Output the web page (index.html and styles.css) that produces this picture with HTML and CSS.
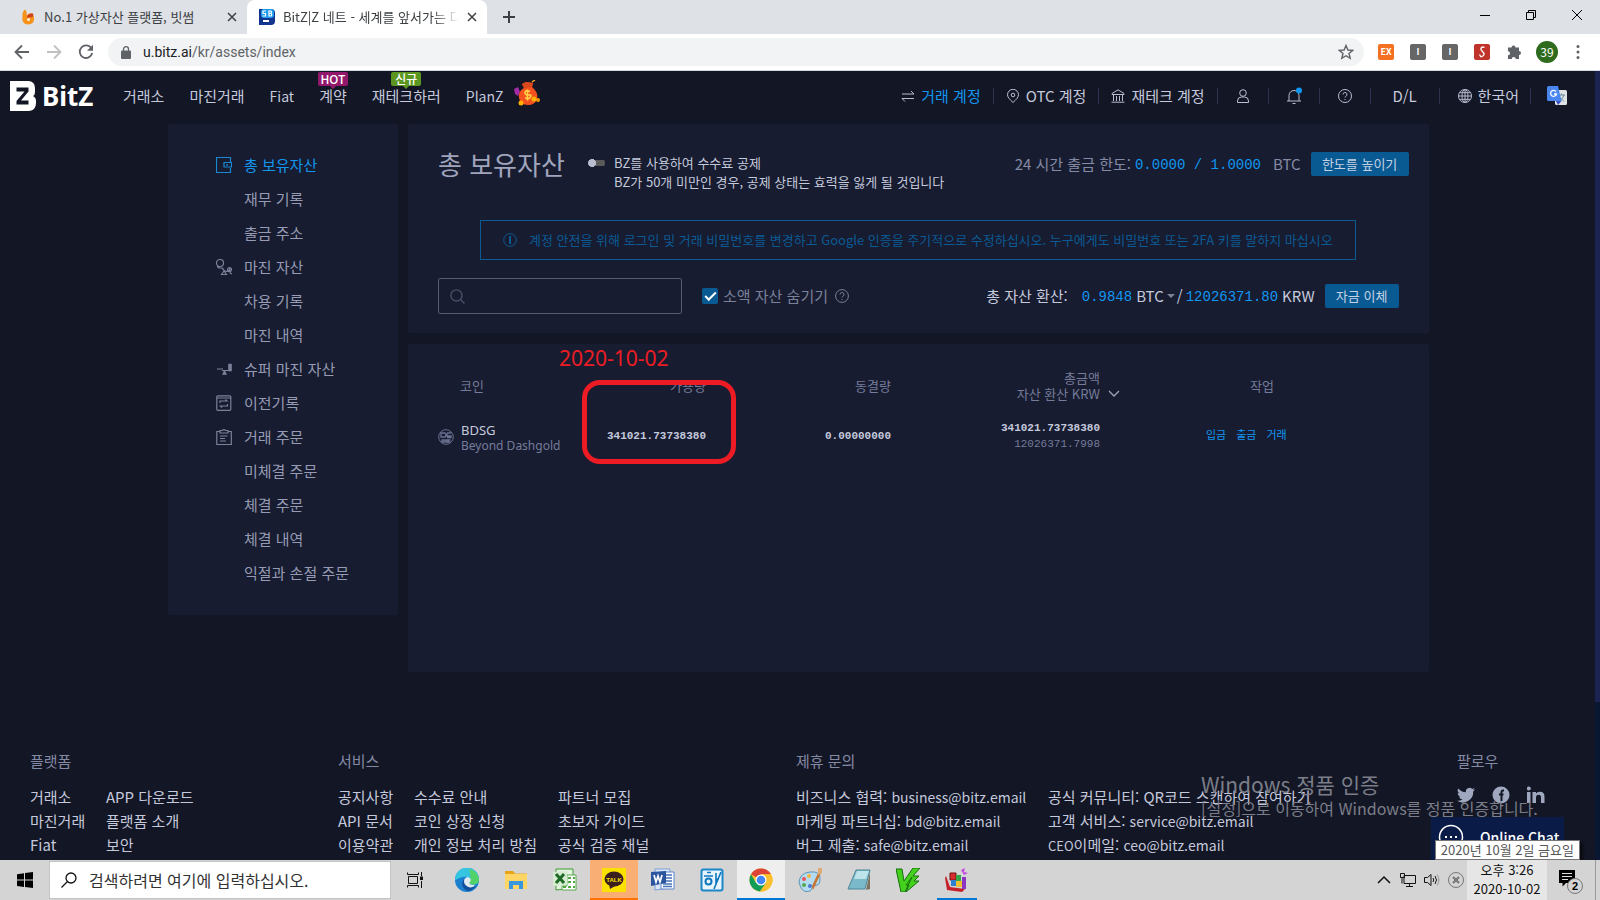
FILE: index.html
```html
<!DOCTYPE html>
<html lang="ko">
<head>
<meta charset="utf-8">
<title>BitZ|Z 네트 - 세계를 앞서가는 디지털 자산 거래소</title>
<link rel="stylesheet" href="styles.css">
</head>
<body>
<div class="tabbar">
  <div class="tab">
    <svg class="tab-fav" viewBox="0 0 16 16"><path d="M5 0.500C3 2 2 5 2.500 7C1.500 12 4 15.500 8 15.500C12 15.500 14.500 12.500 14 9.500C14.500 8 13 5.500 12 4.500C10 4 8 5 7 6.500C6.500 5 7 2 5 .5Z" fill="#f7931a"/><path d="M7 7.500C8 5 10 4 13 4.500C14 8 12 8 11 8.500C9.500 7 8 8.500 7.500 10Z" fill="#d0401c"/><circle cx="8.500" cy="10.500" r="1.500" fill="#fff3e0"/></svg>
    <span class="tab-title">No.1 가상자산 플랫폼, 빗썸</span>
    <button class="tab-close" aria-label="탭 닫기"><svg viewBox="0 0 10 10"><path d="M1 1l8 8M9 1l-8 8"/></svg></button>
  </div>
  <div class="tab tab-active">
    <svg class="tab-fav" viewBox="0 0 16 16"><path d="M0 0h12a4 4 0 0 1 4 4v8a4 4 0 0 1-4 4H0z" fill="#12358f"/><rect x="2" y="0" width="13" height="9" rx="3" fill="#1d9bf0"/><path d="M7 2H4v2.500h2.500V7H3.500M10 2h2q1 1 0 2.500q1.500 1 0 2.500h-2zM10 4.500h2" stroke="#fff" stroke-width="1.200" fill="none"/><path d="M4 12h6" stroke="#fff" stroke-width="2"/></svg>
    <span class="tab-title tab-fade">BitZ|Z 네트 - 세계를 앞서가는 디</span>
    <button class="tab-close" aria-label="탭 닫기"><svg viewBox="0 0 10 10"><path d="M1 1l8 8M9 1l-8 8"/></svg></button>
  </div>
  <button class="tab-new" aria-label="새 탭"><svg viewBox="0 0 12 12"><path d="M6 0v12M0 6h12"/></svg></button>
  <div class="win">
    <button aria-label="최소화"><svg viewBox="0 0 10 10"><path d="M0 5.500h10"/></svg></button>
    <button aria-label="이전 크기로"><svg viewBox="0 0 10 10"><path d="M.5 2.500h7v7h-7zM2.500 2.500v-2h7v7h-2"/></svg></button>
    <button aria-label="닫기"><svg viewBox="0 0 10 10"><path d="M0 0l10 10M10 0L0 10"/></svg></button>
  </div>
</div>
<div class="toolbar">
  <button class="tool" aria-label="뒤로"><svg viewBox="0 0 16 16"><path d="M15 8H2M8 1.500L1.500 8L8 14.500"/></svg></button>
  <button class="tool tool-off" aria-label="앞으로"><svg viewBox="0 0 16 16"><path d="M1 8h13M8 1.500L14.500 8L8 14.500"/></svg></button>
  <button class="tool" aria-label="새로고침"><svg viewBox="0 0 16 16"><path d="M13.500 4.500A6.300 6.300 0 1 0 14.200 9"/><path d="M15 .8v6H9z" fill="#5f6368" stroke="none"/></svg></button>
  <div class="omni">
    <svg class="lock" viewBox="0 0 10 13"><rect x="0" y="4.500" width="10" height="8.500" rx="1" fill="#5f6368"/><path d="M2.500 5V3.200a2.500 2.500 0 0 1 5 0V5" fill="none" stroke="#5f6368" stroke-width="1.300"/></svg>
    <span class="url"><b>u.bitz.ai</b>/kr/assets/index</span>
    <svg class="star" viewBox="0 0 16 16"><path d="M8 1.500l1.900 4.500 4.800.4-3.700 3.100 1.200 4.800L8 11.700l-4.200 2.600L5 9.500 1.300 6.400 6.100 6z" fill="none" stroke="#5f6368" stroke-width="1.400"/></svg>
  </div>
  <div class="exts">
    <span class="ext ext-or">EX</span>
    <span class="ext ext-gr">I</span>
    <span class="ext ext-gr">I</span>
    <span class="ext ext-rd"><svg viewBox="0 0 16 16"><path d="M10.500 3.500C8 2 5.500 4.500 8 7s3.500 4-1 6M5.500 10.500L7 13" fill="none" stroke="#fff" stroke-width="1.300"/></svg></span>
    <svg class="ext" viewBox="0 0 16 16"><path d="M5.500 3.500a2 2 0 1 1 4 0H13v3.500a2 2 0 1 1 0 4V15H9.700a2 2 0 1 0-4 0H2v-3.700a2 2 0 1 0 0-4V3.500z" fill="#5f6368"/></svg>
    <span class="avatar">39</span>
    <svg class="dots" viewBox="0 0 4 16"><circle cx="2" cy="2.500" r="1.500"/><circle cx="2" cy="8" r="1.500"/><circle cx="2" cy="13.500" r="1.500"/></svg>
  </div>
</div>
<main class="page">
  <div class="scrollbar"></div>
  <header class="head">
    <a class="logo" href="#"><svg viewBox="0 0 26 30"><path d="M0 0h19q6 1 6 7v4q0 3-2 4q3 1.500 3 5v2q0 7-7 8H0z" fill="#fff"/><path d="M6.500 6.500h12v4L11 19.500h7.500v4h-12v-3.500L14.500 10.500h-8z" fill="#131625"/></svg><span>BitZ</span></a>
    <nav class="nav">
      <a href="#">거래소</a><a href="#">마진거래</a><a class="lat" href="#">Fiat</a>
      <a href="#">계약<i class="flag flag-hot">HOT</i></a>
      <a href="#">재테크하러<i class="flag flag-new">신규</i></a>
      <a class="lat" href="#">PlanZ</a>
    </nav>
    <svg class="bag" viewBox="0 0 26 26"><path d="M0 9l4-2 2 5-2 4-3-2z" fill="#a52aa8"/><path d="M8 4l4-2 7 1-1 4q7 6 5 12t-9 6q-8 0-9-7t5-10z" fill="#f4511e"/><path d="M8 4l4-2 7 1-1 4-8 1z" fill="#d9481c"/><path d="M18 2l3-2" stroke="#f6a623" stroke-width="1.500"/><path d="M16 11.500q-5-2-5 1t4 2.500t0 3.500l-4-.5M13.500 9.500v11" fill="none" stroke="#ffd54a" stroke-width="1.500"/><circle cx="20" cy="19" r="2.500" fill="#ffb300"/><circle cx="24" cy="20" r="2" fill="#ff9800"/><circle cx="7" cy="23" r="2.500" fill="#ffb300"/></svg>
    <div class="acct">
      <a class="cell on" href="#"><svg viewBox="0 0 14 14"><path d="M1 5h12L10 2M13 9.500H1L4 12.500"/></svg>거래 계정</a>
      <a class="cell" href="#"><svg viewBox="0 0 14 14"><path d="M7 13.500C4 10.500 1.500 8.500 1.500 5.800a5.500 5.500 0 0 1 11 0C12.500 8.500 10 10.500 7 13.500z"/><circle cx="7" cy="6" r="1.800"/></svg>OTC 계정</a>
      <a class="cell" href="#"><svg viewBox="0 0 14 14"><path d="M7 .8L1 4.500V5.500h12V4.500zM2.500 5.500V12M5.500 7v5M8.500 7v5M11.500 5.500V12M.5 13.200h13"/></svg>재테크 계정</a>
      <a class="cell ico" href="#" aria-label="내 계정"><svg viewBox="0 0 14 14"><circle cx="7" cy="4" r="3.300"/><path d="M1.500 13.500v-1.500q0-4 4-4h3q4 0 4 4v1.500z"/></svg></a>
      <a class="cell ico" href="#" aria-label="알림"><svg viewBox="0 0 14 14"><path d="M0 12h14M2 12V6.500a5 5 0 0 1 10 0V12M5.500 14.500h3"/><circle cx="12" cy="1.500" r="3" fill="#1296f0" stroke="none"/></svg></a>
      <a class="cell ico" href="#" aria-label="도움말"><svg viewBox="0 0 14 14"><circle cx="7" cy="7" r="6.500"/><path d="M5 5.500a2 2 0 1 1 2.800 1.800Q7 7.700 7 8.500M7 10v1"/></svg></a>
      <a class="cell dl" href="#">D/L</a>
      <a class="cell lang" href="#"><svg viewBox="0 0 14 14"><circle cx="7" cy="7" r="6.500"/><ellipse cx="7" cy="7" rx="3" ry="6.500"/><path d="M7 .5v13M.5 7h13M1.500 3.700h11M1.500 10.300h11"/></svg>한국어</a>
      <svg class="gt" viewBox="0 0 20 20"><rect x="8" y="4" width="12" height="15" rx="1.500" fill="#dfe3e6"/><path d="M11 9h7M14.500 7.500V9M17 9q-1 4-5 6M12.500 11l4.500 4.500" stroke="#6b8a94" fill="none"/><path d="M1.500 0H11l3.500 15H1.500Q0 15 0 13.500v-12Q0 0 1.500 0z" fill="#4a86f0"/><path d="M9 15h5.500L11 19z" fill="#3a4fc0"/><path d="M9 5.500A3 3 0 1 0 9.500 8H7" stroke="#fff" stroke-width="1.300" fill="none"/></svg>
    </div>
  </header>

  <div class="wrap">
    <aside class="side">
      <a class="on" href="#"><svg viewBox="0 0 16 16"><path d="M14.500 5V.5H.5v15h14V11M8 5.500h7.500v4.500H8zM10 7.800h2"/></svg>총 보유자산</a>
      <a href="#"><span></span>재무 기록</a>
      <a href="#"><span></span>출금 주소</a>
      <a href="#"><svg viewBox="0 0 16 16"><circle cx="4" cy="4" r="3.500"/><path d="M1.500 7q0 2 3 2h2q1 3 3 3M8 12l-2.500 3.500h5zM8 12l3 .5q2 0 3-3.500v5l2 1"/><circle cx="13.500" cy="10.500" r="2"/></svg>마진 자산</a>
      <a href="#"><span></span>차용 기록</a>
      <a href="#"><span></span>마진 내역</a>
      <a href="#"><svg viewBox="0 0 16 16"><path d="M1 8h6M6 9.500h9"/><path d="M12.500 3H15.500v7H12.500zM8.500 9l2 4.500h-4z" fill="#7c819a" stroke-width=".6"/></svg>슈퍼 마진 자산</a>
      <a href="#"><svg viewBox="0 0 16 16"><rect x=".8" y=".8" width="14" height="14.500" rx="1"/><path d="M.8 3h14M4 8V6h7L9.500 4.500M11.500 9v2h-7L6 12.500"/></svg>이전기록</a>
      <a href="#"><svg viewBox="0 0 16 16"><path d="M4 2.500H.8v13h14.500v-13H12M4 1.500h2.500L8 .3l1.500 1.200H12V4H4zM4 7h7.500M4 9.500h5M4 12h6"/></svg>거래 주문</a>
      <a href="#"><span></span>미체결 주문</a>
      <a href="#"><span></span>체결 주문</a>
      <a href="#"><span></span>체결 내역</a>
      <a href="#"><span></span>익절과 손절 주문</a>
    </aside>
    <div class="content">
      <section class="card summary">
        <div class="row top">
          <h1>총 보유자산</h1>
          <div class="fee">
            <input type="checkbox" class="switch" id="fee">
            <label for="fee">BZ를 사용하여 수수료 공제<br>BZ가 50개 미만인 경우, 공제 상태는 효력을 잃게 될 것입니다</label>
          </div>
          <div class="limit"><span>24 시간 출금 한도:</span><span class="num">0.0000 / 1.0000</span><span class="unit">BTC</span><button class="btn btn-wide">한도를 높이기</button></div>
        </div>
        <div class="notice"><svg viewBox="0 0 14 14"><circle cx="7" cy="7" r="6.300"/><path d="M7 3v8" stroke-width="2"/></svg><span>계정 안전을 위해 로그인 및 거래 비밀번호를 변경하고 Google 인증을 주기적으로 수정하십시오. 누구에게도 비밀번호 또는 2FA 키를 말하지 마십시오</span></div>
        <div class="row tools">
          <label class="search"><svg viewBox="0 0 14 14"><circle cx="6" cy="6" r="5.200"/><path d="M10 10l3.500 3.500"/></svg><input type="text" aria-label="코인 검색"></label>
          <label class="hide"><input type="checkbox" checked><span>소액 자산 숨기기</span><svg viewBox="0 0 14 14"><circle cx="7" cy="7" r="6.400"/><path d="M5 5.500a2 2 0 1 1 2.800 1.800Q7 7.700 7 8.500M7 10v1"/></svg></label>
          <div class="total"><span class="total-label">총 자산 환산:</span><span class="num">0.9848</span><button class="pick">BTC<i class="caret"></i></button><span class="slash">/</span><span class="num">12026371.80</span><span class="krw">KRW</span><button class="btn">자금 이체</button></div>
        </div>
      </section>
      <section class="card list">
        <table>
          <colgroup><col class="c1"><col class="c2"><col class="c3"><col class="c4"><col></colgroup>
          <thead><tr><th class="l">코인</th><th>가용량</th><th>동결량</th><th class="sum">총금액<br>자산 환산 KRW<svg viewBox="0 0 12 7"><path d="M1 1l5 5 5-5"/></svg></th><th class="work">작업</th></tr></thead>
          <tbody><tr>
            <td class="coin"><div><svg viewBox="0 0 16 16"><circle cx="8" cy="8" r="7.300"/><path d="M3 4h4l1 2-1 2H3zM13 4H9.500L8.500 7h4.500v1.500H9M4 11h2v2H4zM7.500 11h2v2h-2zM12.500 11h-2v2h2" stroke-width="1.300"/></svg><p><b>BDSG</b>Beyond Dashgold</p></div></td>
            <td class="m">341021.73738380</td><td class="m">0.00000000</td>
            <td class="m">341021.73738380<br><span>12026371.7998</span></td>
            <td class="acts"><a href="#">입금</a><a href="#">출금</a><a href="#">거래</a></td>
          </tr></tbody>
        </table>
        <div class="mark-date">2020-10-02</div>
        <div class="mark-box"></div>
      </section>
    </div>
  </div>

  <footer class="foot">
    <div><h2>플랫폼</h2><div class="links f1"><a href="#">거래소</a><a href="#">APP 다운로드</a><a href="#">마진거래</a><a href="#">플랫폼 소개</a><a href="#">Fiat</a><a href="#">보안</a></div></div>
    <div><h2>서비스</h2><div class="links f2"><a href="#">공지사항</a><a href="#">수수료 안내</a><a href="#">파트너 모집</a><a href="#">API 문서</a><a href="#">코인 상장 신청</a><a href="#">초보자 가이드</a><a href="#">이용약관</a><a href="#">개인 정보 처리 방침</a><a href="#">공식 검증 채널</a></div></div>
    <div><h2>제휴 문의</h2><div class="links f3"><a href="#">비즈니스 협력: <span class="lat">business@bitz.email</span></a><a href="#">공식 커뮤니티: QR코드 스캔하여 참여하기</a><a href="#">마케팅 파트너십: <span class="lat">bd@bitz.email</span></a><a href="#">고객 서비스: <span class="lat">service@bitz.email</span></a><a href="#">버그 제출: <span class="lat">safe@bitz.email</span></a><a href="#"><small>CEO</small>이메일: <span class="lat">ceo@bitz.email</span></a></div></div>
    <div><h2>팔로우</h2><div class="social">
      <a href="#" aria-label="Twitter"><svg viewBox="0 0 18 18"><path d="M18 3.500a7 7 0 0 1-2.100.6A3.700 3.700 0 0 0 17.500 2a7 7 0 0 1-2.300.9A3.700 3.700 0 0 0 8.900 6.300 10.500 10.500 0 0 1 1.300 2.400a3.700 3.700 0 0 0 1.100 5A3.700 3.700 0 0 1 .7 7a3.700 3.700 0 0 0 3 3.600 3.700 3.700 0 0 1-1.700.1 3.700 3.700 0 0 0 3.500 2.600A7.400 7.400 0 0 1 0 14.800 10.500 10.500 0 0 0 16.200 5.400 7.500 7.500 0 0 0 18 3.500z"/></svg></a>
      <a href="#" aria-label="Facebook"><svg viewBox="0 0 18 18"><circle cx="9" cy="9" r="8.500"/><path d="M12 4.500h-1.200Q9.500 4.500 9.500 6v9M7 8.500h4.500" stroke="#131625" stroke-width="2" fill="none"/></svg></a>
      <a href="#" aria-label="LinkedIn"><svg viewBox="0 0 18 18"><path d="M0 6h3.500v11H0zM5.500 6H9v1.500q1-1.800 4-1.800 4.500 0 4.500 5V17H14v-5.500Q14 8.700 11.700 8.700 9 8.700 9 11.500V17H5.500z"/><circle cx="1.800" cy="2.500" r="2"/></svg></a>
    </div></div>
  </footer>

  <button class="chat"><svg viewBox="0 0 26 26"><circle cx="13" cy="13" r="11.500"/><path d="M7 13h2M12 13h2M17 13h2" stroke-width="2"/></svg>Online Chat</button>
  <div class="activate"><p>Windows 정품 인증</p><p>[설정]으로 이동하여 Windows를 정품 인증합니다.</p></div>
  <div class="tip">2020년 10월 2일 금요일</div>
</main>
<div class="taskbar">
  <button class="start" aria-label="시작"><svg viewBox="0 0 16 16"><path d="M0 2.200L7 1.200V7.600H0zM8 1.100L16 0v7.600H8zM0 8.500h7v6.400L0 13.900zM8 8.500h8V16L8 14.900z"/></svg></button>
  <label class="find"><svg viewBox="0 0 16 16"><circle cx="10" cy="6" r="5"/><path d="M6.500 9.500L.5 15.500"/></svg><input type="text" placeholder="검색하려면 여기에 입력하십시오." aria-label="검색"></label>
  <div class="apps">
    <button class="view" aria-label="작업 보기"><svg class="sm" viewBox="0 0 16 16" fill="none" stroke="#111"><path d="M1.500 4.500h9v7h-9zM.5 2.500V.5M.5 2.500h11V.5M.5 15.500v-2h11v2M14.500 0v4M14.500 9v7"/><rect x="13.500" y="5" width="2" height="2.500" fill="#111"/></svg></button>
    <button aria-label="Edge"><svg viewBox="0 0 24 24"><circle cx="12" cy="12" r="12" fill="#1b7fd0"/><path d="M0 12A12 12 0 0 1 24 11q0 5-5 5.500-4 0-5-1.500 2-3-1-5.500T0 12z" fill="#36c5e0"/><path d="M14 1a12 12 0 0 1 10 10q0 5-5 5.500-4 0-5-1.500 3-4 0-14z" fill="#53d26a"/><path d="M9 11q-5 8 4 12a12 12 0 0 0 8-5q-8 3-12-7z" fill="#104f9c"/><path d="M13 9q5 2 1 6 2 3 6 1.500-1 3-5 3-6-2-6-6 0-4 4-4.500z" fill="#dfe9ee"/></svg></button>
    <button aria-label="파일 탐색기"><svg viewBox="0 0 24 24"><path d="M1 3h8l2 2.500h12V20H1z" fill="#e8a317"/><path d="M1 6h22v15H1z" fill="#ffd566"/><path d="M5 21v-8h14v8h-4v-4H9v4z" fill="#3a96dd"/></svg></button>
    <button aria-label="Excel"><svg viewBox="0 0 24 24"><path d="M3 1h17v19l-17 2z" fill="#e4f2df" stroke="#3f9b35"/><path d="M14 7h9v15H9v-4h5z" fill="#fff" stroke="#58a84c"/><path d="M15 9h3v2h-3zM20 9h2v2h-2zM15 13h3v2h-3zM20 13h2v2h-2zM10 18h3v2h-3zM15 18h3v2h-3zM20 18h2v2h-2z" fill="#4fa843"/><path d="M0 4l14-1v14L0 18z" fill="#d6ecd0"/><path d="M3 6l8 9M11 6l-8 9" stroke="#1d6b26" stroke-width="3"/></svg></button>
    <button class="talk" aria-label="카카오톡"><svg viewBox="0 0 24 24"><path d="M0 0h24v24H0z" fill="#fae100"/><ellipse cx="12" cy="11" rx="9.500" ry="7.500" fill="#3b1e1e"/><path d="M7 16l1 5 5-3z" fill="#3b1e1e"/><text x="12" y="13.500" text-anchor="middle" class="talk-t">TALK</text></svg></button>
    <button aria-label="Word"><svg viewBox="0 0 24 24"><path d="M4 1h15v19l-15 2z" fill="#dbe6f7" stroke="#7b9fd6"/><path d="M10 4h13v17H10z" fill="#fff" stroke="#5b85c8"/><path d="M15 7h6M15 10h6M15 13h6M12 16h9M12 18.500h9" stroke="#4472b8" stroke-width="1.500"/><path d="M0 4l15-1v12L0 18z" fill="#2b569f"/><path d="M3 7l2 7 2-6 2 6 2-7" stroke="#fff" stroke-width="1.700" fill="none"/></svg></button>
    <button aria-label="한글"><svg viewBox="0 0 24 24"><rect x="1.500" y="1.500" width="21" height="21" rx="2" fill="#e8f5fd" stroke="#1b86c8" stroke-width="2"/><path d="M7 4.500h4M4 8h9M16 5v12M16 11h3M14 21l7-17" stroke="#1177bd" stroke-width="1.600"/><circle cx="8.500" cy="13.500" r="3" fill="none" stroke="#1177bd" stroke-width="2"/></svg></button>
    <button class="open" aria-label="Chrome"><svg viewBox="0 0 24 24"><circle cx="12" cy="12" r="11.500" fill="#fbc02d"/><path d="M12 12L2 6.300A11.500 11.500 0 0 1 22 6.300H12z" fill="#db4437"/><path d="M2 6.300A11.500 11.500 0 0 0 11 23.500L17 15 7 15z" fill="#0f9d58"/><path d="M12 6.300h10a11.500 11.500 0 0 1-11 17.200L17 15z" fill="#fbc02d"/><circle cx="12" cy="12" r="5.500" fill="#fff"/><circle cx="12" cy="12" r="4.300" fill="#4285f4"/></svg></button>
    <button aria-label="그림판"><svg viewBox="0 0 24 24"><path d="M1 14Q2 5 12 4t10 6-3 7-5 3q-1 4-6 3.500T1 14z" fill="#b4dcf0" stroke="#5a95b8"/><circle cx="6" cy="11" r="2" fill="#e55"/><circle cx="11" cy="8" r="2" fill="#f4b63f"/><circle cx="6" cy="17" r="2" fill="#55a84b"/><circle cx="12" cy="18" r="2" fill="#4a78d0"/><path d="M22 1l1 4-8 17-1-4z" fill="#c8742c"/><path d="M20 0h4v5l-4 2z" fill="#deac73"/></svg></button>
    <button aria-label="메모장"><svg viewBox="0 0 24 24"><path d="M9 2h14l-5 19H1z" fill="#79b9c9" stroke="#4d8798"/><path d="M10 3h12l-3 8H7z" fill="#bfe3eb"/><path d="M23 4v17l-4 1z" fill="#7c7261"/></svg></button>
    <button aria-label="V3"><svg viewBox="0 0 24 24"><path d="M0 1h6l2 12L17 0h7l-7 8h6l-5 5h5L10 24l3-7h-3l6-8-7 15H5z" fill="#46d01e" stroke="#14700a"/></svg></button>
    <button class="run" aria-label="유틸리티"><svg viewBox="0 0 24 24"><path d="M1 8l4 11 15 2-3 3-15-2L0 10z" fill="#c5202c"/><path d="M5 5h6v7H5z" fill="#d92e2e" stroke="#7a1010"/><path d="M11 7h5v6h-5z" fill="#33a84a"/><path d="M6 12h5v6H6z" fill="#2f7fd0"/><path d="M11 13h6v6h-6z" fill="#f0c030"/><path d="M17 9h4v12h-4z" fill="#8b35c0"/><path d="M16 2l4-2-1 4 4 1-4 2z" fill="#c34be0"/></svg></button>
  </div>
  <div class="tray">
    <svg viewBox="0 0 16 16"><path d="M2 11l6-6 6 6" stroke-width="1.500"/></svg>
    <svg viewBox="0 0 16 16"><path d="M4 3.500h11.500v8H4zM9.500 11.500v3M6 14.500h7M.5 1.500h4v4h-4zM2 5.500v6"/></svg>
    <svg viewBox="0 0 16 16"><path d="M.5 5.500h3L7 2.500v11l-3.500-3h-3z"/><path d="M9 6q1.500 2 0 4M11 4q3 4 0 8"/><path d="M13 2.500q4 5.500 0 11" stroke="#999"/></svg>
    <svg viewBox="0 0 16 16" class="gray"><circle cx="8" cy="8" r="7.500"/><path d="M5 5l6 6M11 5l-6 6" stroke-width="2.200"/></svg>
  </div>
  <div class="clock"><span>오후 3:26</span><span>2020-10-02</span></div>
  <button class="note" aria-label="알림 센터"><svg viewBox="0 0 26 26"><path d="M1 1h16v13H8l-3.500 3.500V14H1z" fill="#000"/><path d="M4 4.500h10M4 7.500h10M4 10.500h6" stroke="#ddd"/><circle cx="17" cy="17" r="7.500" fill="#d4d4d4" stroke="#777"/><text x="17" y="21" text-anchor="middle" class="note-t">2</text></svg></button>
  <span class="desk"></span>
</div>
</body>
</html>
```
FILE: styles.css
```css
* { box-sizing: border-box; }
body { margin: 0; height: 100vh; display: flex; flex-direction: column; overflow: hidden; font-family: "Noto Sans CJK KR", "Noto Sans", sans-serif; font-size: 15px; line-height: 24px; color: #c5c9dc; background: #131625; }
button, input { font: inherit; color: inherit; background: none; border: 0; padding: 0; margin: 0; }
a { color: inherit; text-decoration: none; }
h1, h2, p { margin: 0; font-weight: 400; }
svg { flex: none; display: block; }
.lat { font-size: 14px; }

/* browser tabs */
.tabbar { flex: none; display: flex; height: 34px; background: #dee1e6; color: #3c4043; font-size: 13px; line-height: 34px; }
.tab { display: flex; align-items: center; width: 247px; padding: 0 10px 0 20px; gap: 8px; }
.tab-active { width: 240px; padding-left: 12px; background: #fff; border-radius: 8px 8px 0 0; }
.tab-fav { width: 16px; height: 16px; }
.tab-title { flex: 1; min-width: 0; overflow: hidden; white-space: nowrap; }
.tab-fade { mask-image: linear-gradient(90deg, #000 85%, transparent); }
.tab-close svg { width: 10px; height: 10px; stroke: #3c4043; stroke-width: 1.500; }
.tab-new { margin-left: 16px; }
.tab-new svg { width: 12px; height: 12px; stroke: #3c4043; stroke-width: 2; }
.win { margin-left: auto; display: flex; align-items: center; padding-bottom: 5px; }
.win button { width: 46px; height: 28px; display: grid; place-items: center; }
.win svg { width: 10px; height: 10px; fill: none; stroke: #000; }

.toolbar { flex: none; display: flex; align-items: center; height: 37px; padding-left: 14px; background: #fff; border-bottom: 1px solid #d5d9dd; }
.tool { width: 16px; margin-right: 16px; }
.tool svg { width: 16px; height: 16px; fill: none; stroke: #5f6368; stroke-width: 1.800; }
.tool-off { opacity: .4; }
.omni { flex: 1; display: flex; align-items: center; height: 28px; margin-left: -2px; padding: 0 10px 0 13px; border-radius: 14px; background: #f1f3f4; }
.lock { width: 10px; height: 13px; margin-right: 12px; }
.url { flex: 1; font-family: Roboto, sans-serif; font-size: 14px; color: #5f6368; }
.url b { font-weight: 400; color: #202124; }
.star { width: 16px; height: 16px; }
.exts { display: flex; align-items: center; gap: 16px; padding: 0 20px 0 14px; }
.ext { width: 16px; height: 16px; border-radius: 2px; color: #fff; font-size: 9px; line-height: 16px; text-align: center; font-weight: 700; }
.ext-or { background: #f36f21; }
.ext-gr { background: #666; }
.ext-rd { background: #c0332b; }
.avatar { width: 22px; height: 22px; margin: 0 2px 0 -2px; border-radius: 50%; background: #2f6b1e; color: #fff; font-size: 12px; line-height: 22px; text-align: center; }
.dots { width: 4px; height: 16px; fill: #5f6368; }

/* page */
.page { position: relative; flex: 1; min-height: 0; overflow: hidden; padding-right: 5px; }
.scrollbar { position: absolute; top: 0; right: 0; width: 5px; height: 100%; background: linear-gradient(#1b2350 80%, #0a1733 80%); }
.head { display: flex; align-items: center; height: 49px; margin-bottom: 4px; padding-left: 10px; white-space: nowrap; }
.logo { display: flex; align-items: center; gap: 6px; width: 113px; color: #fff; font: 700 26px/30px "Noto Sans", sans-serif; }
.logo svg { width: 26px; height: 30px; }
.nav { display: flex; gap: 25px; }
.nav a { position: relative; }
.flag { position: absolute; left: 50%; top: -12px; width: 30px; height: 14px; margin-left: -15px; border-radius: 2px; color: #fff; font-size: 12px; font-style: normal; font-weight: 500; line-height: 14px; text-align: center; }
.flag::after { content: ""; position: absolute; left: 12px; top: 14px; border: 3px solid transparent; border-top-color: inherit; border-bottom: 0; }
.flag-hot { background: #92186c; border-color: #92186c; }
.flag-new { background: #5a9620; border-color: #5a9620; }
.bag { width: 26px; height: 26px; margin: -5px 0 0 11px; }
.acct { margin-left: auto; display: flex; align-items: center; padding-right: 28px; }
.cell { display: flex; align-items: center; gap: 6px; height: 16px; padding: 0 12px; border-right: 1px solid #2c3150; }
.cell svg { width: 14px; height: 14px; fill: none; stroke: #b9bdd0; }
.cell.on { color: #1296f0; }
.ico { width: 51px; justify-content: center; }
.ico svg { overflow: visible; }
.dl { width: 69px; justify-content: center; }
.lang { padding: 0 11px 0 18px; }
.gt { width: 20px; height: 20px; margin-left: 16px; }

.wrap { display: flex; align-items: flex-start; gap: 10px; max-width: 1259px; margin: 0 auto; }
.side { width: 230px; flex: none; padding: 24px 0 25px 48px; background: #171c30; border-radius: 2px; color: #969bb3; }
.side a { display: flex; align-items: center; gap: 12px; height: 34px; }
.side svg, .side span { width: 16px; height: 16px; }
.side svg { fill: none; stroke: #7c819a; stroke-width: 1.200; }
.side .on { color: #1296f0; }
.side .on svg { stroke: #1b86d2; }
.content { flex: 1; min-width: 0; display: grid; gap: 11px; }
.card { position: relative; background: #171c30; border-radius: 2px; white-space: nowrap; }
.summary { padding: 20px 20px 19px 30px; }
.row { display: flex; }
.top { height: 76px; }
h1 { font-size: 26px; line-height: 40px; color: #a0a5bd; width: 150px; }
.fee { display: flex; align-items: flex-start; gap: 9px; padding-top: 9px; font-size: 13px; line-height: 19px; color: #c5c9dc; }
.switch { appearance: none; width: 17px; height: 8px; margin-top: 6px; border-radius: 4px; background: radial-gradient(circle at 4px 4px, #b9bdd0 4px, transparent 4px), linear-gradient(transparent 1px, #5a5a5a 1px, #5a5a5a 7px, transparent 7px); }
.limit { margin-left: auto; display: flex; align-items: center; height: 40px; color: #858aa4; }
.num { padding-top: 2px; font: 14px/24px "Liberation Mono", monospace; color: #1296f0; }
.limit .num { margin: 0 12px 0 4px; }
.btn { height: 24px; width: 74px; margin-left: 10px; border-radius: 2px; background: #095a93; color: #c5d2e4; font-size: 13px; line-height: 24px; }
.btn-wide { width: 98px; }
.notice { display: flex; align-items: center; gap: 12px; height: 40px; margin: 0 53px 18px 42px; padding: 0 22px; border: 1px solid #0b5a94; color: #0b5a94; font-size: 13px; }
.notice svg { width: 14px; height: 14px; fill: none; stroke: #0b5a94; }
.tools { align-items: center; }
.search { display: flex; align-items: center; gap: 10px; width: 244px; height: 36px; padding: 0 11px; border: 1px solid #555a72; border-radius: 2px; }
.search svg { width: 15px; height: 15px; fill: none; stroke: #4a4f68; stroke-width: 1.300; }
.search input { flex: 1; min-width: 0; outline: 0; }
.hide { display: flex; align-items: center; margin-left: 20px; color: #7c819a; }
.hide input { appearance: none; width: 16px; height: 16px; margin-right: 5px; border-radius: 2px; background: #095a93; display: grid; place-items: center; }
.hide input:checked::after { content: ""; width: 9px; height: 4px; border: solid #fff; border-width: 0 0 2px 2px; transform: translateY(-1px) rotate(-45deg); }
.hide svg { width: 14px; height: 14px; margin-left: 7px; fill: none; stroke: #7c819a; }
.total { margin-left: auto; display: flex; align-items: center; padding-right: 10px; color: #c5c9dc; }
.total-label { margin-right: 14px; }
.pick { display: flex; align-items: center; gap: 3px; margin: 0 2px 0 4px; }
.caret { border: 4px solid transparent; border-top-color: #7c819a; border-bottom: 0; }
.slash { margin-right: 3px; }
.krw { margin-left: 4px; }

.list { height: 328px; padding-top: 18px; }
table { width: 100%; table-layout: fixed; border-collapse: collapse; font-size: 13px; line-height: 16px; color: #757b99; }
.c1 { width: 172px; }
.c2 { width: 126px; }
.c3 { width: 185px; }
.c4 { width: 209px; }
th { height: 50px; padding: 0 0 2px; font-weight: 400; text-align: right; }
td { height: 48px; padding: 0; }
th.l { text-align: left; padding-left: 52px; }
.sum { position: relative; }
.sum svg { position: absolute; right: -20px; bottom: 15px; width: 12px; height: 7px; fill: none; stroke: #a0a5bd; stroke-width: 1.300; }
th.work { text-align: left; padding-left: 150px; }
.coin div { display: flex; align-items: center; gap: 7px; padding: 4px 0 0 30px; font-family: "Noto Sans", sans-serif; font-size: 12px; }
.coin svg { width: 16px; height: 16px; margin-top: -2px; fill: none; stroke: #6a7090; }
.coin b { display: block; font-size: 13px; font-weight: 400; color: #c5c9dc; }
.m { font: 700 11px/16px "Liberation Mono", monospace; text-align: right; color: #c5c9dc; }
.m span { font-weight: 400; color: #757b99; }
.acts { padding: 0 0 4px 106px; font-size: 11px; color: #1296f0; }
.acts a { margin-right: 10px; }
.mark-date { position: absolute; left: 151px; top: 1px; color: #ed1c24; font: 21px/26px "Noto Sans", sans-serif; }
.mark-box { position: absolute; left: 174px; top: 36px; width: 154px; height: 84px; border: 5px solid #ed1c24; border-radius: 18px; }

.foot { display: grid; grid-template-columns: 308fr 458fr 661fr 138fr; margin-top: 77px; padding-left: 30px; white-space: nowrap; }
.foot > div { min-width: 0; }
h2 { font-size: 15px; line-height: 24px; margin-bottom: 12px; color: #858aa4; }
.links { display: grid; grid-auto-rows: 24px; }
.links small { font-size: 13px; }
.f1 { grid-template-columns: 76px 1fr; }
.f2 { grid-template-columns: 76px 144px 1fr; }
.f3 { grid-template-columns: 252px 1fr; }
.social { display: flex; gap: 17px; }
.social svg { width: 18px; height: 18px; margin-top: 1px; fill: #a0a8c0; }

.chat { position: absolute; right: 36px; bottom: 0; width: 133px; height: 43px; display: flex; gap: 16px; padding: 7px 0 0 7px; background: #0a1b48; color: #fff; font-size: 14px; font-weight: 500; line-height: 26px; white-space: nowrap; }
.chat svg { width: 26px; height: 26px; fill: none; stroke: #fff; stroke-width: 1.500; }
.activate { position: absolute; right: 63px; bottom: 41px; width: 336px; color: #7b7e88; white-space: nowrap; line-height: 22px; font-size: 16px; }
.activate p:first-child { font-size: 21px; line-height: 26px; }
.tip { position: absolute; right: 20px; bottom: 0; height: 20px; padding: 0 5px; border: 1px solid #767676; background: #fff; color: #575757; font-size: 13px; line-height: 17px; box-shadow: 3px 3px 3px #0008; white-space: nowrap; }

/* taskbar */
.taskbar { flex: none; display: flex; align-items: center; height: 40px; background: #d4d4d4; color: #111; }
.start { width: 49px; display: grid; place-items: center; }
.start svg { width: 16px; height: 16px; }
.find { display: flex; align-items: center; gap: 12px; width: 342px; height: 38px; padding: 0 11px; background: #fff; border: 1px solid #c4c4c4; }
.find svg { width: 16px; height: 16px; fill: none; stroke: #111; stroke-width: 1.300; }
.find input { flex: 1; min-width: 0; font-size: 16px; }
.find input::placeholder { color: #333; opacity: 1; }
.apps { display: flex; gap: 1px; height: 40px; }
.apps button { width: 48px; height: 40px; display: grid; place-items: center; }
.apps .view { margin-right: 3px; }
.apps svg { width: 24px; height: 24px; }
.apps .sm { width: 16px; height: 16px; }
.apps .talk { background: #f9ae74; border-bottom: 2px solid #ff7200; padding-top: 2px; }
.talk-t { font: 700 6px "Liberation Sans", sans-serif; fill: #fae100; }
.apps .open { background: #eee; border-bottom: 2px solid #0078d7; padding-top: 2px; }
.apps .run { border-bottom: 2px solid #0078d7; padding-top: 2px; width: 40px; margin-left: 4px; }
.tray { margin-left: auto; display: flex; gap: 8px; padding-right: 3px; }
.tray svg { width: 16px; height: 16px; fill: none; stroke: #111; }
.tray .gray { stroke: #777; }
.clock { display: grid; width: 80px; height: 40px; padding: 1px 0; background: #e6e6e6; font-size: 13px; line-height: 18px; text-align: center; }
.note { width: 48px; padding-left: 11px; }
.note svg { width: 26px; height: 26px; margin-top: 4px; }
.note-t { font: 700 11px "Liberation Sans", sans-serif; }
.desk { width: 5px; height: 40px; border-left: 1px solid #999; }
```
